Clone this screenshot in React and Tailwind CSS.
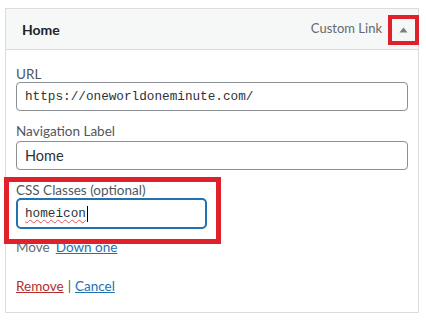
import React from 'react'

const sans = { fontFamily: 'Lato, "Noto Sans", sans-serif' }
const mono = { fontFamily: '"Liberation Mono", "DejaVu Sans Mono", monospace' }

function Field({ label, children, className = '' }) {
  return (
    <div className={className}>
      <div className="text-[13.5px] leading-[16px] text-[#50575e]">{label}</div>
      {children}
    </div>
  )
}

export default function App() {
  return (
    <div className="w-[426px] h-[321px] bg-white pt-2 pl-[5px]" style={sans}>
      <div className="w-[414px] border border-[#dcdcde] bg-white">
        <div className="relative flex h-[41px] items-center justify-between border-b border-[#dcdcde] bg-[#f6f7f7] pl-4 pr-[36px]">
          <span className="text-[14px] font-bold text-[#1d2327]">Home</span>
          <span className="text-[13px] text-[#646970]">Custom Link</span>
          <div className="absolute right-[-1px] top-[6px] flex h-[30px] w-[31px] items-center justify-center border-4 border-[#e0202b]">
            <svg width="9" height="6" viewBox="0 0 9 6">
              <path d="M0.5 5.5 L4.5 0.5 L8.5 5.5 Z" fill="#787c82" />
            </svg>
          </div>
        </div>

        <div className="flex flex-col px-[10px] pt-4 pb-[18px]">
          <Field label="URL">
            <div className="flex h-[29px] items-center rounded-[4px] border border-[#8c8f94] px-2 text-[12.7px] text-[#2c3338]" style={mono}>
              https://oneworldoneminute.com/
            </div>
          </Field>

          <Field label="Navigation Label" className="mt-3">
            <div className="mt-[2px] flex h-[29px] items-center rounded-[4px] border border-[#8c8f94] px-2 text-[14.5px] text-[#2c3338]">
              Home
            </div>
          </Field>

          <div className="relative mt-3">
            <Field label="CSS Classes (optional)">
              <div className="flex h-[31px] w-[191px] items-center rounded-[5px] border-2 border-[#2271b1] px-[7px] text-[12.7px] text-[#2c3338]" style={mono}>
                <span className="underline decoration-wavy decoration-[#e0535b] decoration-1 underline-offset-2">homeicon</span>
                <span className="ml-[1px] h-[16px] w-px bg-black" />
              </div>
            </Field>
            <div className="pointer-events-none absolute left-[-12px] top-[-5px] h-[67px] w-[217px] border-[5px] border-[#e0202b]" />
          </div>

          <div className="mt-[10px] flex text-[13.5px] leading-[16px]">
            <span className="text-[#646970]">Move</span>
            <a className="ml-[6px] text-[#2271b1] underline">Down one</a>
          </div>

          <div className="mt-[23px] flex text-[13.5px] leading-[16px] text-[#50575e]">
            <a className="text-[#b32d2e] underline">Remove</a>
            <span className="mx-[4px]">|</span>
            <a className="text-[#2271b1] underline">Cancel</a>
          </div>
        </div>
      </div>
    </div>
  )
}
